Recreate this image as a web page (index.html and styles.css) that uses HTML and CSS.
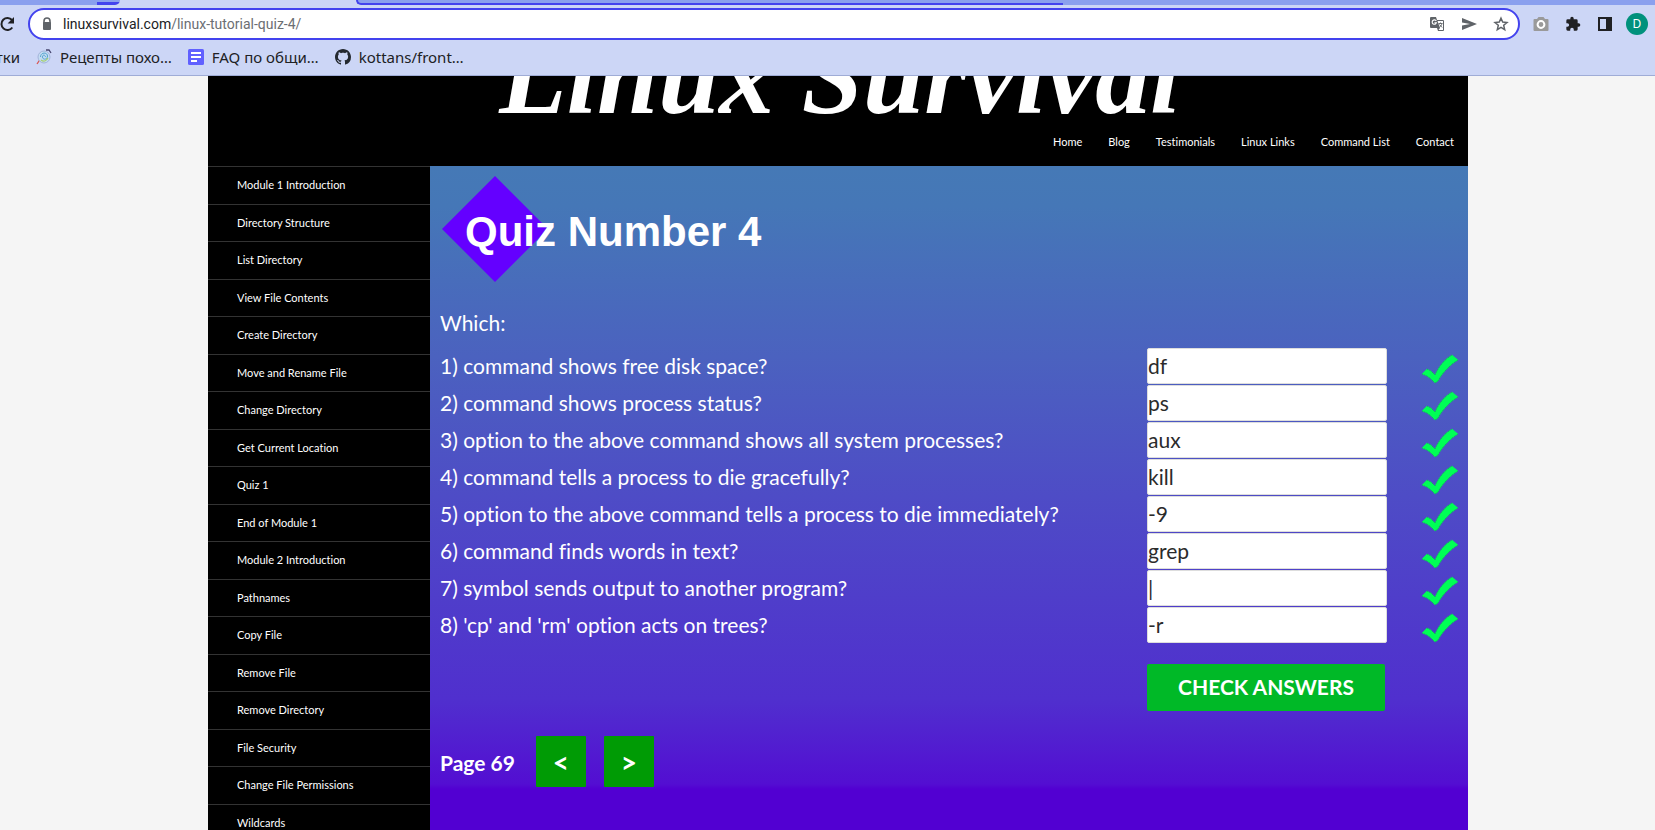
FILE: index.html
```html
<!DOCTYPE html>
<html lang="en">
<head>
<meta charset="utf-8">
<title>Linux Survival - Quiz Number 4</title>
<link rel="stylesheet" href="styles.css">
</head>
<body>
<svg class="defs" width="0" height="0" aria-hidden="true">
  <symbol id="tick" viewBox="0 0 38 30">
    <path d="M1 20 6 15 10 17 14 21C18 12 24 5 31 1L37 6C30 10 21 19 17 27L14 29 10 25 6 22 1 20Z" fill="#00ff55" stroke="#00ff55" stroke-width=".5"/>
    <path d="M6 15 10 17 14 21C18 12 24 5 31 1M37 6C30 10 21 19 17 27L14 29 10 25 6 22 1 20" fill="none" stroke="#198c66" stroke-width=".8" stroke-dasharray="1 1"/>
  </symbol>
</svg>
<div class="browser">
  <div class="tabstrip">
    <span class="tab-left"></span>
    <span class="tab-active"></span>
    <span class="tab-group"></span>
    <span class="tab-rest"></span>
  </div>
  <div class="toolbar">
    <button class="icon-btn reload" aria-label="Reload">
      <svg width="16" height="16" viewBox="0 0 16 16"><path d="M12.3 11.5A6 6 0 1 1 12 4" fill="none" stroke="#202124" stroke-width="2"/><path d="M14 1v6.400H7.600z" fill="#202124"/></svg>
    </button>
    <div class="omnibox">
      <svg width="16" height="16" viewBox="0 0 16 16"><path d="M5 7V5a3 3 0 0 1 6 0v2" fill="none" stroke="#5f6368" stroke-width="1.600"/><rect x="4" y="6" width="8" height="8" rx="1" fill="#5f6368"/></svg>
      <span class="url"><span class="host">linuxsurvival.com</span>/linux-tutorial-quiz-4/</span>
      <button class="icon-btn" aria-label="Translate this page">
        <svg width="16" height="16" viewBox="0 0 16 16"><path d="M2 1h5l1 3h6a1 1 0 0 1 1 1v9a1 1 0 0 1-1 1H9l-1-3H2a1 1 0 0 1-1-1V2a1 1 0 0 1 1-1z" fill="#5f6368"/><path d="M8.500 5H14v9H9.500L11 12z" fill="#fff"/><path d="M7.300 5A2.200 2.200 0 1 0 7.500 6.700H5.400" fill="none" stroke="#fff" stroke-width="1.100"/><path d="M9.500 7.500h4M11.500 6.500v1M13 7.500c-.5 2-1.500 3-2.500 3.800M10.500 8.500l2.700 3" fill="none" stroke="#5f6368" stroke-width=".9"/></svg>
      </button>
      <button class="icon-btn" aria-label="Share this page">
        <svg width="16" height="16" viewBox="0 0 16 16"><path d="M1 2 16 8 1 14V9.500L9 8 1 6.500z" fill="#5f6368"/></svg>
      </button>
      <button class="icon-btn" aria-label="Bookmark this page">
        <svg width="16" height="16" viewBox="0 0 16 16"><path d="M8 2.200 9.700 6.100 14 6.500 10.700 9.300 11.700 13.700 8 11.400 4.300 13.700 5.300 9.300 2 6.500 6.300 6.100z" fill="none" stroke="#5f6368" stroke-width="1.500"/></svg>
      </button>
    </div>
    <button class="icon-btn" aria-label="Screenshot">
      <svg width="16" height="16" viewBox="0 0 16 16"><path d="M1.500 3H4l1.500-2h5L12 3h2.500a1 1 0 0 1 1 1v10a1 1 0 0 1-1 1h-13a1 1 0 0 1-1-1V4a1 1 0 0 1 1-1z" fill="#9a9a9a"/><circle cx="8" cy="8.500" r="3.400" fill="none" stroke="#fff" stroke-width="2"/></svg>
    </button>
    <button class="icon-btn" aria-label="Extensions">
      <svg width="16" height="16" viewBox="0 0 24 24"><path d="M20.500 11H19V7a2 2 0 0 0-2-2h-4V3.500a2.500 2.500 0 0 0-5 0V5H4a2 2 0 0 0-2 2v3.800h1.500a2.700 2.700 0 0 1 0 5.400H2V20a2 2 0 0 0 2 2h3.800v-1.500a2.700 2.700 0 0 1 5.400 0V22H17a2 2 0 0 0 2-2v-4h1.500a2.500 2.500 0 0 0 0-5z" fill="#202124"/></svg>
    </button>
    <button class="icon-btn" aria-label="Side panel">
      <svg width="16" height="16" viewBox="0 0 16 16"><path d="M1 1h14v14H1zM3 3v10h6V3z" fill="#202124" fill-rule="evenodd"/></svg>
    </button>
    <button class="avatar" aria-label="Profile">D</button>
  </div>
  <nav class="bookmarks" aria-label="Bookmarks">
    <a class="bookmark bookmark-cut" href="#">тки</a>
    <a class="bookmark" href="#">
      <svg width="16" height="16" viewBox="0 0 16 16"><path d="M1 15 5 9" stroke="#d9534f" stroke-width="1.300"/><circle cx="8" cy="8" r="6" fill="#c4dcf2" stroke="#a3b4da" stroke-width="1"/><path d="M4.500 8c0-5 7-5 7-1s-5 4-5 1 3-2 3 0" fill="none" stroke="#55a5d0" stroke-width="1"/><path d="M5 11q4 3 7-2" fill="none" stroke="#a8cf70" stroke-width="1.300"/><path d="M10 1h3l2 3" fill="none" stroke="#46466f" stroke-width="1.300"/></svg>
      Рецепты похо…</a>
    <a class="bookmark" href="#">
      <svg width="16" height="16" viewBox="0 0 16 16"><rect width="16" height="16" rx="1.500" fill="#6060ff"/><path d="M3 4h10M3 8h10M3 12h6" stroke="#fff" stroke-width="2"/></svg>
      FAQ по общи…</a>
    <a class="bookmark" href="#">
      <svg width="16" height="16" viewBox="0 0 16 16"><path fill="#24292f" d="M8 0C3.580 0 0 3.580 0 8c0 3.540 2.290 6.530 5.470 7.590.4.070.55-.17.55-.38 0-.19-.01-.82-.01-1.490-2.010.37-2.530-.49-2.690-.94-.09-.23-.48-.94-.82-1.130-.28-.15-.68-.52-.01-.53.63-.01 1.080.58 1.230.82.72 1.210 1.870.87 2.330.66.07-.52.28-.87.51-1.070-1.780-.2-3.640-.89-3.640-3.950 0-.87.31-1.590.82-2.150-.08-.2-.36-1.020.08-2.120 0 0 .67-.21 2.200.82.64-.18 1.320-.27 2-.27s1.360.09 2 .27c1.530-1.040 2.200-.82 2.200-.82.44 1.100.16 1.920.08 2.120.51.56.82 1.270.82 2.150 0 3.070-1.870 3.750-3.650 3.950.29.25.54.73.54 1.480 0 1.070-.01 1.930-.01 2.200 0 .21.15.46.55.38A8.010 8.010 0 0 0 16 8c0-4.420-3.580-8-8-8z"/></svg>
      kottans/front…</a>
  </nav>
</div>
<div class="viewport">
  <div class="site">
    <header class="masthead">
      <div class="wordmark">Linux Survival</div>
      <nav class="topnav" aria-label="Site">
        <a href="#">Home</a><a href="#">Blog</a><a href="#">Testimonials</a><a href="#">Linux Links</a><a href="#">Command List</a><a href="#">Contact</a>
      </nav>
    </header>
    <div class="columns">
      <nav class="sidebar" aria-label="Lessons">
        <a href="#">Module 1 Introduction</a>
        <a href="#">Directory Structure</a>
        <a href="#">List Directory</a>
        <a href="#">View File Contents</a>
        <a href="#">Create Directory</a>
        <a href="#">Move and Rename File</a>
        <a href="#">Change Directory</a>
        <a href="#">Get Current Location</a>
        <a href="#">Quiz 1</a>
        <a href="#">End of Module 1</a>
        <a href="#">Module 2 Introduction</a>
        <a href="#">Pathnames</a>
        <a href="#">Copy File</a>
        <a href="#">Remove File</a>
        <a href="#">Remove Directory</a>
        <a href="#">File Security</a>
        <a href="#">Change File Permissions</a>
        <a href="#">Wildcards</a>
      </nav>
      <main class="quiz">
        <h1 class="title">Quiz Number 4</h1>
        <p class="lead">Which:</p>
        <form class="questions">
          <div class="question"><label for="q1">1) command shows free disk space?</label><input id="q1" type="text" value="df"><svg class="tick"><use href="#tick"/></svg></div>
          <div class="question"><label for="q2">2) command shows process status?</label><input id="q2" type="text" value="ps"><svg class="tick"><use href="#tick"/></svg></div>
          <div class="question"><label for="q3">3) option to the above command shows all system processes?</label><input id="q3" type="text" value="aux"><svg class="tick"><use href="#tick"/></svg></div>
          <div class="question"><label for="q4">4) command tells a process to die gracefully?</label><input id="q4" type="text" value="kill"><svg class="tick"><use href="#tick"/></svg></div>
          <div class="question"><label for="q5">5) option to the above command tells a process to die immediately?</label><input id="q5" type="text" value="-9"><svg class="tick"><use href="#tick"/></svg></div>
          <div class="question"><label for="q6">6) command finds words in text?</label><input id="q6" type="text" value="grep"><svg class="tick"><use href="#tick"/></svg></div>
          <div class="question"><label for="q7">7) symbol sends output to another program?</label><input id="q7" type="text" value="|"><svg class="tick"><use href="#tick"/></svg></div>
          <div class="question"><label for="q8">8) 'cp' and 'rm' option acts on trees?</label><input id="q8" type="text" value="-r"><svg class="tick"><use href="#tick"/></svg></div>
          <button class="check" type="button">CHECK ANSWERS</button>
        </form>
        <div class="pager">
          <span>Page 69</span>
          <button type="button" aria-label="Previous page">&lt;</button>
          <button type="button" aria-label="Next page">&gt;</button>
        </div>
      </main>
    </div>
  </div>
</div>
</body>
</html>
```
FILE: styles.css
```css
* { box-sizing: border-box; }
body {
  margin: 0;
  height: 100vh;
  display: flex;
  flex-direction: column;
  overflow: hidden;
  background: #f5f5f5;
  font-family: Lato, sans-serif;
  font-variant-ligatures: none;
}
a { color: inherit; text-decoration: none; }
button { border: 0; padding: 0; background: none; font: inherit; color: inherit; }
svg { display: block; flex: none; }
.defs { position: absolute; }

/* Browser chrome */
.browser {
  flex: none;
  background: #ccd6f6;
  border-bottom: 1px solid #9facd6;
  font-family: "Noto Sans", sans-serif;
  color: #202124;
}
.tabstrip { display: flex; height: 5px; }
.tab-left {
  width: 120px;
  background: linear-gradient(90deg, transparent 97px, #4343ee 97px) 0 2px / 100% 3px no-repeat, #8aa0ee;
  border-bottom-right-radius: 5px;
}
.tab-active { width: 236px; }
.tab-group {
  flex: 0 1 707px;
  background: #8aa0ee;
  border-bottom: 2px solid #4343ee;
  border-left: 2px solid #4343ee;
  border-bottom-left-radius: 5px;
}
.tab-rest { flex: 1; background: #8aa0ee; }
.toolbar {
  display: flex;
  align-items: center;
  gap: 16px;
  padding: 3px 7px 0 0;
}
.icon-btn { flex: none; width: 16px; height: 16px; }
.reload { margin-right: -4px; }
.omnibox {
  flex: 1;
  display: flex;
  align-items: center;
  gap: 16px;
  height: 32px;
  padding: 0 9px;
  border: 2px solid #4343ee;
  border-radius: 16px;
  background: #fff;
}
.url { flex: 1; margin-left: -8px; font: 14px/20px Roboto, sans-serif; color: #6b6e73; }
.host { color: #202124; }
.omnibox + .icon-btn { margin-left: -3px; }
.avatar {
  width: 22px;
  height: 22px;
  margin-left: -3px;
  border-radius: 50%;
  background: #00917c;
  color: #fff;
  font-size: 12px;
  line-height: 22px;
}
.bookmarks { display: flex; gap: 16px; height: 35px; padding-bottom: 2px; align-items: center; }
.bookmark { display: flex; align-items: center; gap: 8px; font-size: 15px; line-height: 20px; white-space: nowrap; }
.bookmark-cut { width: 20px; justify-content: flex-end; overflow: hidden; }

/* Site */
.viewport { flex: 1; min-height: 0; overflow: hidden; padding: 0 187px 0 208px; }
.site { height: 100%; display: flex; flex-direction: column; color: #fff; background: #000; }
.masthead {
  flex: none;
  height: 90px;
  display: flex;
  flex-direction: column;
  justify-content: flex-end;
  overflow: hidden;
}
.wordmark {
  padding-left: 4px;
  font: italic bold 110px/84px "Liberation Serif", serif;
  text-align: center;
  white-space: nowrap;
}
.topnav {
  display: flex;
  justify-content: flex-end;
  gap: 26px;
  padding: 0 14px;
  font-size: 11px;
  line-height: 48px;
}
.columns { flex: 1; min-height: 0; display: flex; }
.sidebar { flex: none; width: 222px; }
.sidebar a {
  display: block;
  padding-left: 29px;
  border-top: 1px solid #333;
  font-size: 11px;
  line-height: 36px;
}
.sidebar a:nth-child(odd) { padding-bottom: 1px; }
.quiz {
  flex: 1;
  padding: 10px 9px 0 10px;
  font-size: 21px;
  line-height: 36px;
  background: linear-gradient(#4579b6, #4577b7 40px, #4b62bf 190px, #4e4cc6 330px, #502fce 534px, #530ed2 618px, #5200d2 623px);
}
.title {
  position: relative;
  z-index: 0;
  margin: 0;
  height: 108px;
  padding-left: 25px;
  font: bold 42px/112px "Liberation Sans", sans-serif;
}
.title::before {
  content: "";
  position: absolute;
  z-index: -1;
  top: 0;
  left: 2px;
  width: 106px;
  height: 106px;
  background: #6400ff;
  clip-path: polygon(50% 0, 100% 50%, 50% 100%, 0 50%);
}
.lead { margin: 21px 0 7px; }
.questions { display: flex; flex-direction: column; gap: 1px; }
.question { display: grid; grid-template-columns: 1fr 240px 38px; column-gap: 34px; }
.question input {
  width: 240px;
  height: 36px;
  padding: 0;
  border: 1px solid #ddd;
  border-radius: 2px;
  background: #fff;
  color: #2b2b2b;
  font: inherit;
}
.tick { width: 38px; height: 30px; align-self: end; }
.check {
  align-self: flex-end;
  width: 238px;
  height: 47px;
  margin: 20px 74px 0 0;
  padding-bottom: 2px;
  border-radius: 2px;
  background: #00b927;
  font-weight: bold;
}
.pager { display: flex; align-items: center; margin-top: 25px; font-weight: bold; }
.pager span { margin: 2px 21px 0 0; }
.pager button {
  width: 50px;
  height: 51px;
  margin-right: 18px;
  border-radius: 1px;
  background: #009b05;
  font-size: 28px;
}
```
